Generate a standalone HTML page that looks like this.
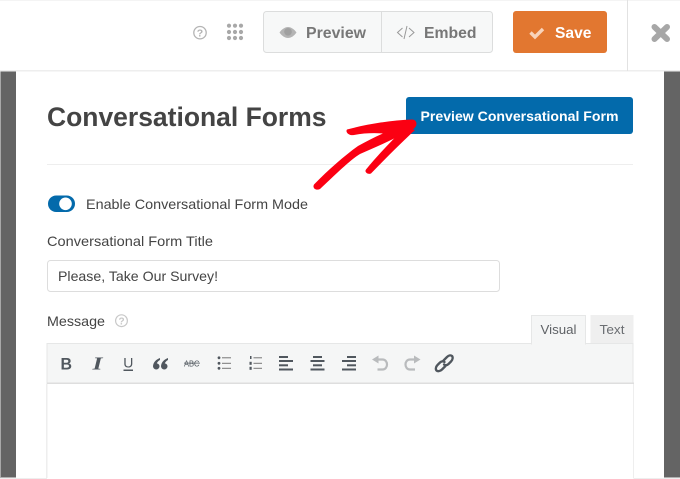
<!DOCTYPE html>
<html><head><meta charset="utf-8">
<style>
html,body{margin:0;padding:0;background:#fff;width:680px;height:479px;overflow:hidden}
svg{display:block}
text{font-family:"Liberation Sans",sans-serif}
</style></head>
<body>
<svg width="680" height="479" viewBox="0 0 680 479" xmlns="http://www.w3.org/2000/svg">
<rect width="680" height="479" fill="#fff"/>
<!-- side overlays -->
<rect x="0" y="71" width="16" height="406" fill="#646464"/>
<rect x="0" y="71" width="1" height="406" fill="#a8a8a8"/>
<rect x="664" y="71" width="16" height="406" fill="#646464"/>
<rect x="0" y="477" width="16" height="1" fill="#b0b0b0"/>
<rect x="664" y="477" width="16" height="1" fill="#b0b0b0"/>
<rect x="0" y="478" width="680" height="1" fill="#eeeeee"/>
<!-- top bar -->
<rect x="0" y="0" width="680" height="1" fill="#f4f4f4"/>
<rect x="0" y="70" width="680" height="1.5" fill="#eeeeee"/>
<rect x="627" y="0" width="1" height="71" fill="#e2e2e2"/>
<circle cx="200" cy="32.700" r="6.200" fill="none" stroke="#b4b4b4" stroke-width="1.300"/>
<text x="200" y="36.500" font-size="10.500" font-weight="bold" fill="#b4b4b4" text-anchor="middle">?</text>
<g fill="#a8a8a8">
<circle cx="229" cy="25.700" r="2.100"/><circle cx="235" cy="25.700" r="2.100"/><circle cx="241" cy="25.700" r="2.100"/>
<circle cx="229" cy="32" r="2.100"/><circle cx="235" cy="32" r="2.100"/><circle cx="241" cy="32" r="2.100"/>
<circle cx="229" cy="38" r="2.100"/><circle cx="235" cy="38" r="2.100"/><circle cx="241" cy="38" r="2.100"/>
</g>
<rect x="263.500" y="11.500" width="229" height="41" rx="3" fill="#f7f8f8" stroke="#dcdddd"/>
<rect x="381" y="12" width="1" height="40" fill="#dcdddd"/>
<path d="M279.500 32.500C282 29 285 27 288 27s6 2 8.500 5.500C294 36 291 38 288 38s-6-2-8.500-5.500z" fill="#b4b4b4"/>
<circle cx="288" cy="31.800" r="3.800" fill="#a0a0a0"/>
<text x="306" y="38" font-size="16" font-weight="bold" fill="#777" textLength="60" lengthAdjust="spacingAndGlyphs">Preview</text>
<path d="M402.500 28l-5 4.500 5 4.500M409 37l5-4.500-5-4.500M407 26l-3 13" fill="none" stroke="#999" stroke-width="1"/>
<text x="424" y="38" font-size="16" font-weight="bold" fill="#777" textLength="52.500" lengthAdjust="spacingAndGlyphs">Embed</text>
<rect x="513" y="11" width="94" height="42" rx="3" fill="#e27730"/>
<path d="M530.500 32.500l4.500 4.500 8-8" fill="none" stroke="#f8d3ba" stroke-width="3.400"/>
<text x="555" y="38" font-size="16" font-weight="bold" fill="#fff" textLength="36.500" lengthAdjust="spacingAndGlyphs">Save</text>
<path d="M654.500 27l12.500 12M667 27l-12.500 12" fill="none" stroke="#a7a7a7" stroke-width="6" stroke-linecap="round"/>
<!-- heading -->
<text x="47" y="126" font-size="27" font-weight="bold" fill="#444" textLength="279.500" lengthAdjust="spacingAndGlyphs">Conversational Forms</text>
<rect x="406" y="97" width="227" height="37" rx="3" fill="#036aab"/>
<text x="420.500" y="121" font-size="14" font-weight="bold" fill="#fff" textLength="198" lengthAdjust="spacingAndGlyphs">Preview Conversational Form</text>
<rect x="47" y="164" width="586" height="1" fill="#eeeeee"/>
<!-- arrow -->
<g fill="#fb0012">
<path d="M347 129.500C368 124 392 120 412 119.500C417 119.500 417.500 125 415 127.500L412 130C408 134 404 137 398 135.500C385 133 370 132 354 135C349 136 345 132 347 129.500z"/>
<path d="M314 184.500C328 170 344 156 358 146C374 137 390 130 406 124L409 131C392 140 374 148 360 154C350 160 335 175 320 189C316 191 312 188 314 184.500z"/>
<path d="M366 169.500C378 155 392 140 406 127L415 130C402 142 386 158 371 173.500C368 175 364 172 366 169.500z"/>
</g>
<!-- toggle -->
<rect x="48" y="195.500" width="27" height="16.500" rx="8.200" fill="#036aab"/>
<circle cx="65.500" cy="203.800" r="6.300" fill="#fff"/>
<text x="86" y="209" font-size="14" fill="#444" textLength="222" lengthAdjust="spacingAndGlyphs">Enable Conversational Form Mode</text>
<text x="47" y="246" font-size="14" fill="#444" textLength="166" lengthAdjust="spacingAndGlyphs">Conversational Form Title</text>
<rect x="47.500" y="260.500" width="452" height="31" rx="3" fill="#fff" stroke="#dddddd"/>
<text x="58" y="281" font-size="14" fill="#444" textLength="160" lengthAdjust="spacingAndGlyphs">Please, Take Our Survey!</text>
<text x="47" y="326" font-size="14" fill="#444" textLength="58" lengthAdjust="spacingAndGlyphs">Message</text>
<circle cx="121.500" cy="320.700" r="5.900" fill="none" stroke="#c8c8c8" stroke-width="1.200"/>
<text x="121.500" y="324.500" font-size="10" font-weight="bold" fill="#c8c8c8" text-anchor="middle">?</text>
<!-- editor -->
<rect x="47" y="384" width="586.500" height="95" fill="#fff"/>
<rect x="46" y="384" width="1.500" height="94" fill="#eeeeee"/>
<rect x="633" y="384" width="1" height="94" fill="#eeeeee"/>
<rect x="47" y="343.500" width="586" height="40" fill="#f5f6f6" stroke="#e6e7e7"/>
<rect x="47" y="382.500" width="587" height="1.500" fill="#dedede"/>
<rect x="531.500" y="315.500" width="54" height="28.500" fill="#f5f6f6" stroke="#e6e7e7"/>
<rect x="532" y="343" width="53" height="2" fill="#f5f6f6"/>
<rect x="590.500" y="315" width="43" height="28" fill="#efefef"/>
<text x="540.500" y="334" font-size="13" fill="#5f6266" textLength="36" lengthAdjust="spacingAndGlyphs">Visual</text>
<text x="599.500" y="334" font-size="13" fill="#6b6e72" textLength="25" lengthAdjust="spacingAndGlyphs">Text</text>
<!-- toolbar icons -->
<text x="60.500" y="369.500" font-size="17" font-weight="bold" fill="#50575e" textLength="11.500" lengthAdjust="spacingAndGlyphs">B</text>
<text x="97.500" y="369.500" font-size="18" font-weight="bold" font-style="italic" fill="#50575e" text-anchor="middle" style="font-family:'Liberation Serif',serif" textLength="10" lengthAdjust="spacingAndGlyphs">I</text>
<text x="128.300" y="367.700" font-size="14" fill="#50575e" text-anchor="middle">U</text>
<rect x="123.500" y="369.500" width="9.500" height="1.500" fill="#50575e"/>
<g fill="#50575e">
<path d="M160 358C156 359.500 153.500 362 153 366C153 368 154.500 369.500 156.300 369.500C158 369.500 159.500 368 159.500 366.300C159.500 364.500 158 363.500 156.800 363.500C157.300 362 158.500 360.800 160 360z"/>
<path d="M168 358C164 359.500 161.500 362 161 366C161 368 162.500 369.500 164.300 369.500C166 369.500 167.500 368 167.500 366.300C167.500 364.500 166 363.500 164.800 363.500C165.300 362 166.500 360.800 168 360z"/>
</g>
<text x="184" y="366.500" font-size="8" fill="#50575e" textLength="15.500" lengthAdjust="spacingAndGlyphs">ABC</text>
<rect x="184" y="362.700" width="16" height="0.800" fill="#50575e"/>
<g fill="#50575e">
<circle cx="219" cy="357.800" r="1.400"/><circle cx="219" cy="363.300" r="1.400"/><circle cx="219" cy="368.300" r="1.400"/>
<rect x="222" y="357.300" width="9" height="1" fill="#777"/><rect x="222" y="362.800" width="9" height="1" fill="#777"/><rect x="222" y="367.800" width="9" height="1" fill="#777"/>
<rect x="253.500" y="357.300" width="8.500" height="1" fill="#777"/><rect x="253.500" y="362.800" width="8.500" height="1" fill="#777"/><rect x="253.500" y="367.800" width="8.500" height="1" fill="#777"/>
<rect x="250" y="356" width="1.500" height="3"/><rect x="249.500" y="361.800" width="2.200" height="3"/><rect x="249.500" y="366.800" width="2.200" height="3"/>
<!-- align left -->
<rect x="279" y="356" width="9" height="2"/><rect x="279" y="360" width="14" height="2"/><rect x="279" y="364.300" width="9" height="2"/><rect x="279" y="368.500" width="14" height="2"/>
<!-- align centre -->
<rect x="313" y="356" width="9" height="2"/><rect x="310.500" y="360" width="14" height="2"/><rect x="313" y="364.300" width="9" height="2"/><rect x="310.500" y="368.500" width="14" height="2"/>
<!-- align right -->
<rect x="347" y="356" width="9" height="2"/><rect x="342" y="360" width="14" height="2"/><rect x="347" y="364.300" width="9" height="2"/><rect x="342" y="368.500" width="14" height="2"/>
</g>
<path d="M378.500 355.500l-6.500 4 6.500 4z" fill="#b9bbbd"/>
<path d="M376 359.500h6.500c6 0 6 10 0 10h-5" fill="none" stroke="#b9bbbd" stroke-width="2.200"/>
<path d="M414 355.500l6.500 4-6.500 4z" fill="#b9bbbd"/>
<path d="M416.500 359.500h-6.500c-6 0-6 10 0 10h5" fill="none" stroke="#b9bbbd" stroke-width="2.200"/>
<g fill="none" stroke="#50575e" stroke-width="2.300" stroke-linecap="round">
<path d="M443.500 360.500l3.500-3.500c2-2 4-2 5-1s1 3.500-1 5.500l-2.500 2.500c-1.500 1.500-3.500 1.500-4.500.5"/>
<path d="M445.500 366l-3.500 3.500c-2 2-4.500 2-5.500 1s-1-3.500 1-5.500l2.500-2.500c1.500-1.500 3.500-1.500 4.500-.5"/>
</g>
</svg>
</body></html>
